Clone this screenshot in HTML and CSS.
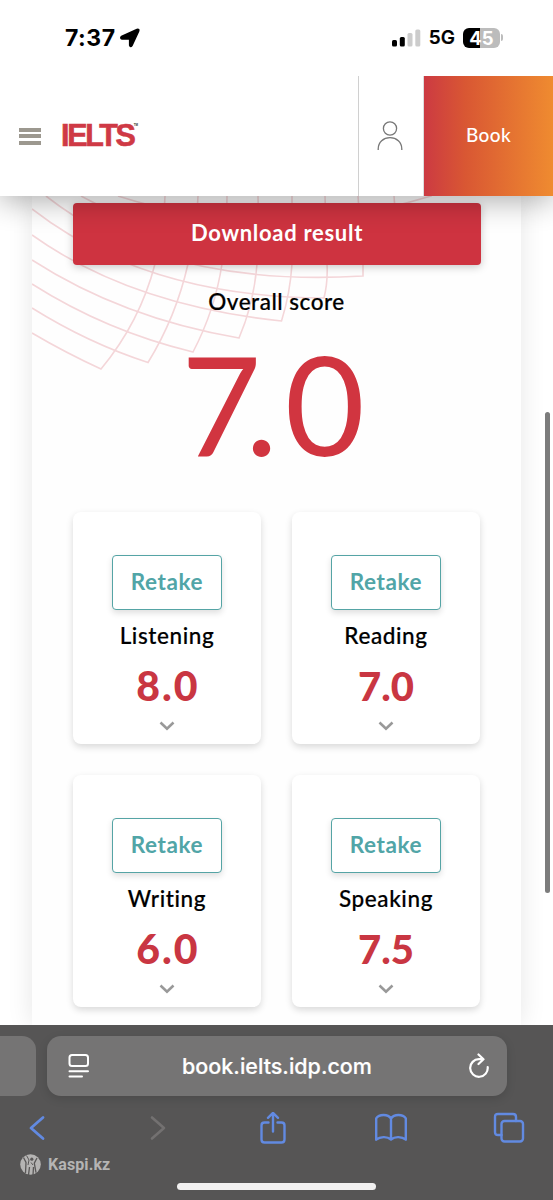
FILE: index.html
```html
<!DOCTYPE html>
<html lang="en">

<head>
    <meta charset="UTF-8">
    <title>IELTS results</title>
    <link rel="stylesheet" href="styles.css">
</head>

<body>
    <div class="phone">
        <div class="status">
            <div class="status-left">
                <span class="time">7:37</span>
                <svg class="location" width="20" height="20" viewBox="0 0 20 20">
                    <path d="M1.5 8.600 17 1.400q2.400-.7 1.600 1.700L12 17.500q-1.600 1.900-2.300-.3V11H2.200q-2.300-.9-.7-2.400z" fill="#000" stroke="#000" stroke-width="1.600" stroke-linejoin="round" />
                </svg>
            </div>
            <div class="status-right">
                <svg width="29" height="18" viewBox="0 0 29 18">
                    <rect x="0" y="11" width="5" height="6.500" rx="1.500" />
                    <rect x="7.800" y="8" width="5" height="9.500" rx="1.500" />
                    <rect x="15.500" y="4" width="5" height="13.500" rx="1.500" fill="#ccc" />
                    <rect x="23.300" y="0.500" width="5" height="17" rx="1.500" fill="#ccc" />
                </svg>
                <span class="network">5G</span>
                <span class="battery">45</span>
                <i class="battery-tip"></i>
            </div>
        </div>

        <header class="header">
            <div class="menu"><i></i><i></i><i></i></div>
            <div class="logo">IELTS<sup>TM</sup></div>
            <div class="account">
                <svg width="26" height="30" viewBox="0 0 26 30" fill="none" stroke="#777" stroke-width="1.300">
                    <circle cx="13" cy="7.500" r="6.600" />
                    <path d="M1.200 29V28C1.200 21 6.500 16.700 13 16.700S24.800 21 24.800 28v1" />
                </svg>
            </div>
            <div class="book">Book</div>
        </header>

        <main class="content">
            <section class="panel">
                <svg class="waves" width="489" height="180" viewBox="32 196 489 180">
                    <path d="M32 333Q66 353 101 369Q140 322 155 264Q164 230 165 196" />
                    <path d="M32 308Q88 343 148 362.500Q176 317 188 264Q197 230 198 196" />
                    <path d="M32 284Q106 331 193 352Q215 310 222 264Q227 230 227 196" />
                    <path d="M32 260Q122 318 239 338Q254 303 257 264Q259 230 258 196" />
                    <path d="M32 235Q130 305 281.500 321Q290 294 292 264V196" />
                    <path d="M32 209Q145 297 324 298Q328 282 327 264L325 196" />
                    <path d="M46 196Q163 288 363 276V264L358 196" />
                    <path d="M81 196Q215 270 398 249L394 196" />
                    <path d="M118 196Q270 245 431 196L429 190" />
                </svg>
                <button class="download">Download result</button>
                <h2 class="overall">Overall score</h2>
                <div class="score"><span class="seven">7</span><span class="dot">.</span>0</div>
                <div class="cards">
                    <div class="card">
                        <button class="retake">Retake</button>
                        <span class="skill">Listening</span>
                        <b class="band wide">8.0</b>
                        <svg class="arrow" width="16" height="10" viewBox="0 0 16 10"><path d="M1.500 1.500 8 7.700l6.500-6.200" /></svg>
                    </div>
                    <div class="card">
                        <button class="retake">Retake</button>
                        <span class="skill">Reading</span>
                        <b class="band">7.0</b>
                        <svg class="arrow" width="16" height="10" viewBox="0 0 16 10"><path d="M1.500 1.500 8 7.700l6.500-6.200" /></svg>
                    </div>
                    <div class="card">
                        <button class="retake">Retake</button>
                        <span class="skill">Writing</span>
                        <b class="band wide">6.0</b>
                        <svg class="arrow" width="16" height="10" viewBox="0 0 16 10"><path d="M1.500 1.500 8 7.700l6.500-6.200" /></svg>
                    </div>
                    <div class="card">
                        <button class="retake">Retake</button>
                        <span class="skill">Speaking</span>
                        <b class="band">7.5</b>
                        <svg class="arrow" width="16" height="10" viewBox="0 0 16 10"><path d="M1.500 1.500 8 7.700l6.500-6.200" /></svg>
                    </div>
                </div>
            </section>
            <i class="scrollbar"></i>
        </main>

        <footer class="browser">
            <div class="tabs">
                <div class="prev-tab"></div>
                <div class="address">
                    <svg width="22" height="26" viewBox="0 0 22 26" fill="none" stroke="#fff" stroke-width="2" stroke-linecap="round">
                        <rect x="1.500" y="2" width="18.500" height="11" rx="2.500" />
                        <path d="M1.500 18.200h18.500M1.500 23.500h12.500" />
                    </svg>
                    <span class="url">book.ielts.idp.com</span>
                    <svg width="22" height="26" viewBox="0 0 22 26" fill="none" stroke="#fff" stroke-width="2.200" stroke-linecap="round" stroke-linejoin="round">
                        <path d="M15 6.200H11A8.800 8.800 0 1 0 19.700 14M10.500 1.500l5 4.700-5 4.800" />
                    </svg>
                </div>
            </div>
            <div class="toolbar">
                <svg width="32" height="32" viewBox="0 0 32 32"><path d="M22 5.500 10 16l12 10.500" stroke-width="2.800" /></svg>
                <svg class="off" width="32" height="32" viewBox="0 0 32 32"><path d="M10 5.500 22 16 10 26.500" stroke-width="2.600" /></svg>
                <svg width="32" height="32" viewBox="0 0 32 32"><path d="M11.500 10.500H7.500q-3 0-3 3V27.500q0 3 3 3H24.500q3 0 3-3V13.500q0-3-3-3H20.500M16 19.500V1M11 5.800 16 .9l5 4.900" /></svg>
                <svg width="32" height="32" viewBox="0 0 32 32"><path d="M16 6.500v20.500M16 6.500C13 1.800 4 2 1.200 6.300V27.700C5 24.500 12 24 16 27.500C20 24 27 24.500 30.800 27.700V6.300C28 2 19 1.800 16 6.500z" /></svg>
                <svg width="32" height="32" viewBox="0 0 32 32"><rect x="8.500" y="9" width="21.500" height="20.500" rx="3" /><path d="M8.500 23H5q-3 0-3-3V5q0-3 3-3H20q3 0 3 3V9" /></svg>
            </div>
            <div class="watermark">
                <svg width="21" height="21" viewBox="0 0 21 21">
                    <circle cx="10.500" cy="10.500" r="10.300" fill="#b5b4b3" />
                    <path d="M3.500 3.500 6 8.500 5.500 19M17 4l-2.700 5.200 1.700 9.500M9.500 13 8.500 21M13.500 13l-.5 8" fill="none" stroke="#595757" stroke-width="1.300" />
                    <path d="M6.500 1.500 9 6 8 11M11 8.500l2 2.500" fill="none" stroke="#595757" />
                    <circle cx="11.800" cy="5.200" r="1.600" fill="#595757" />
                </svg>
                <span>Kaspi.kz</span>
            </div>
            <i class="home"></i>
        </footer>
    </div>
</body>

</html>
```
FILE: styles.css
```css
* {
    box-sizing: border-box;
}

body {
    margin: 0;
    font-family: Lato, "Open Sans", sans-serif;
    background: #fff;
}

.phone {
    display: flex;
    flex-direction: column;
    width: 553px;
    height: 1200px;
    overflow: hidden;
}

.status {
    height: 76px;
    flex: none;
    display: flex;
    justify-content: space-between;
    padding: 25px 50px 0 65px;
    background: #fff;
    font-family: Inter, sans-serif;
    position: relative;
    z-index: 3;
}

.status-left,
.status-right {
    display: flex;
    align-items: center;
    height: 25px;
}

.time {
    font-size: 23px;
    font-weight: 700;
    letter-spacing: 0.5px;
}

.location {
    margin-left: 4px;
}

.network {
    margin: 0 8px 0 8px;
    font-size: 19px;
    font-weight: 600;
    -webkit-text-stroke: 0.2px #000;
}

.battery {
    width: 37px;
    height: 20px;
    border-radius: 6px;
    background: linear-gradient(90deg, #000 46%, #bcbcbc 46%);
    color: #fff;
    font-size: 18.5px;
    font-weight: 700;
    line-height: 20px;
    text-align: center;
}

.battery-tip {
    width: 2px;
    height: 7px;
    margin-left: 1px;
    border-radius: 0 3px 3px 0;
    background: #bcbcbc;
}

.header {
    height: 120px;
    flex: none;
    display: flex;
    align-items: center;
    padding-left: 19px;
    background: #fff;
    box-shadow: 0 5px 28px rgba(0, 0, 0, .32);
    position: relative;
    z-index: 2;
}

.menu {
    width: 22px;
    display: grid;
    gap: 2.5px;
}

.menu i {
    height: 4px;
    background: #9c988f;
}

.logo {
    flex: 1;
    margin: -2px 0 0 20px;
    color: #cf3945;
    font: 700 30.5px/36px "Liberation Sans", sans-serif;
    letter-spacing: -2.3px;
    -webkit-text-stroke: 0.6px #cf3945;
    display: flex;
}

.logo sup {
    margin: 6px 0 0;
    font-size: 3px;
    line-height: 4px;
    letter-spacing: 0;
    color: #333;
    -webkit-text-stroke: 0;
}

.account {
    width: 66px;
    height: 120px;
    border-left: 1px solid #d0d0d0;
    border-right: 1px solid #ddd;
    display: flex;
    align-items: center;
    justify-content: center;
}

.account svg {
    margin-right: 2px;
}

.book {
    width: 129px;
    height: 120px;
    background: linear-gradient(90deg, #cc3a42, #d95733 32%, #ef8b30);
    color: #fff;
    font-size: 19px;
    font-weight: 500;
    letter-spacing: 0.4px;
    line-height: 118px;
    text-align: center;
}

.content {
    flex: 1;
    min-height: 0;
    position: relative;
}

.panel {
    width: 489px;
    height: 829px;
    margin-left: 32px;
    padding: 7px 41px 0;
    background: #fefefe;
    box-shadow: 0 0 24px rgba(0, 0, 0, .1);
    position: relative;
}

/* curved mesh behind the button */
.waves {
    position: absolute;
    left: 0;
    top: 0;
    fill: none;
    stroke: #f4d6d9;
    stroke-width: 1.6;
}

.download {
    display: block;
    width: 408px;
    height: 62px;
    padding: 0 0 3px;
    border: 0;
    border-radius: 4px;
    background: #ce3340;
    box-shadow: 0 2px 8px rgba(0, 0, 0, .22);
    color: #fff;
    font: 700 22px Lato, sans-serif;
    letter-spacing: 0.7px;
    position: relative;
}

.overall {
    margin: 22px 0 0;
    font-size: 22.5px;
    font-weight: 500;
    line-height: 30px;
    letter-spacing: 0.5px;
    text-align: center;
    position: relative;
    -webkit-text-stroke: 0.2px #000;
}

.score {
    height: 195px;
    margin-right: 7px;
    color: #d13540;
    font-size: 138px;
    line-height: 172px;
    text-align: center;
    font-kerning: none;
    position: relative;
}

.score .seven {
    letter-spacing: -16px;
}

.score .dot {
    letter-spacing: 7px;
}

.cards {
    display: grid;
    grid-template-columns: 188px 188px;
    gap: 31px;
}

.card {
    height: 232px;
    padding-top: 43px;
    border-radius: 8px;
    background: #fff;
    box-shadow: 0 3px 7px rgba(0, 0, 0, .15);
    display: flex;
    flex-direction: column;
    align-items: center;
}

.retake {
    width: 110px;
    height: 55px;
    flex: none;
    padding: 0 0 2px;
    border: 1.5px solid #55a4a5;
    border-radius: 4px;
    background: #fff;
    box-shadow: 0 3px 6px rgba(0, 0, 0, .13);
    color: #51a5a7;
    font: 700 22.5px Lato, sans-serif;
    letter-spacing: 0.6px;
}

.skill {
    margin-top: 10px;
    font-size: 22.5px;
    font-weight: 500;
    line-height: 31px;
    letter-spacing: 0.6px;
    -webkit-text-stroke: 0.2px #000;
}

.band {
    margin-top: 12px;
    color: #c93642;
    font-size: 40px;
    font-weight: 900;
    line-height: 46px;
}

.band.wide {
    font-size: 41px;
    letter-spacing: 2px;
    margin-right: -2px;
}

.arrow {
    margin-top: 12px;
    fill: none;
    stroke: #999;
    stroke-width: 2.6;
}

.scrollbar {
    position: absolute;
    top: 216px;
    right: 3px;
    width: 5px;
    height: 481px;
    border-radius: 3px;
    background: #7c7c7c;
}

.browser {
    height: 175px;
    flex: none;
    background: #565555;
    position: relative;
    z-index: 3;
}

.tabs {
    display: flex;
    gap: 11px;
    padding-top: 11px;
}

.prev-tab {
    width: 36px;
    height: 60px;
    border-radius: 0 14px 14px 0;
    background: #757474;
}

.address {
    width: 460px;
    height: 60px;
    padding: 0 17px 0 21px;
    border-radius: 14px;
    background: #757474;
    box-shadow: 0 3px 10px rgba(0, 0, 0, .13);
    display: flex;
    align-items: center;
    justify-content: space-between;
}

.url {
    margin-right: 4px;
    color: #fff;
    font: 500 21.5px Inter, sans-serif;
    -webkit-text-stroke: 0.2px #fff;
}

.toolbar {
    display: flex;
    justify-content: space-between;
    padding: 16px 28px 0 21px;
    width: 553px;
}

.toolbar svg {
    fill: none;
    stroke: #628ae1;
    stroke-width: 2.4;
    stroke-linecap: round;
    stroke-linejoin: round;
}

.toolbar .off {
    margin: 0 -3px 0 3px;
    stroke: #737171;
}

.watermark {
    display: flex;
    align-items: center;
    gap: 7px;
    margin: 9px 0 0 20px;
    color: #b5b4b3;
    font: 700 16px Roboto, sans-serif;
    letter-spacing: 0.1px;
    height: 22px;
}

.home {
    display: block;
    width: 199px;
    height: 7px;
    margin: 8px auto 0;
    border-radius: 4px;
    background: #f1f0f0;
}
```
